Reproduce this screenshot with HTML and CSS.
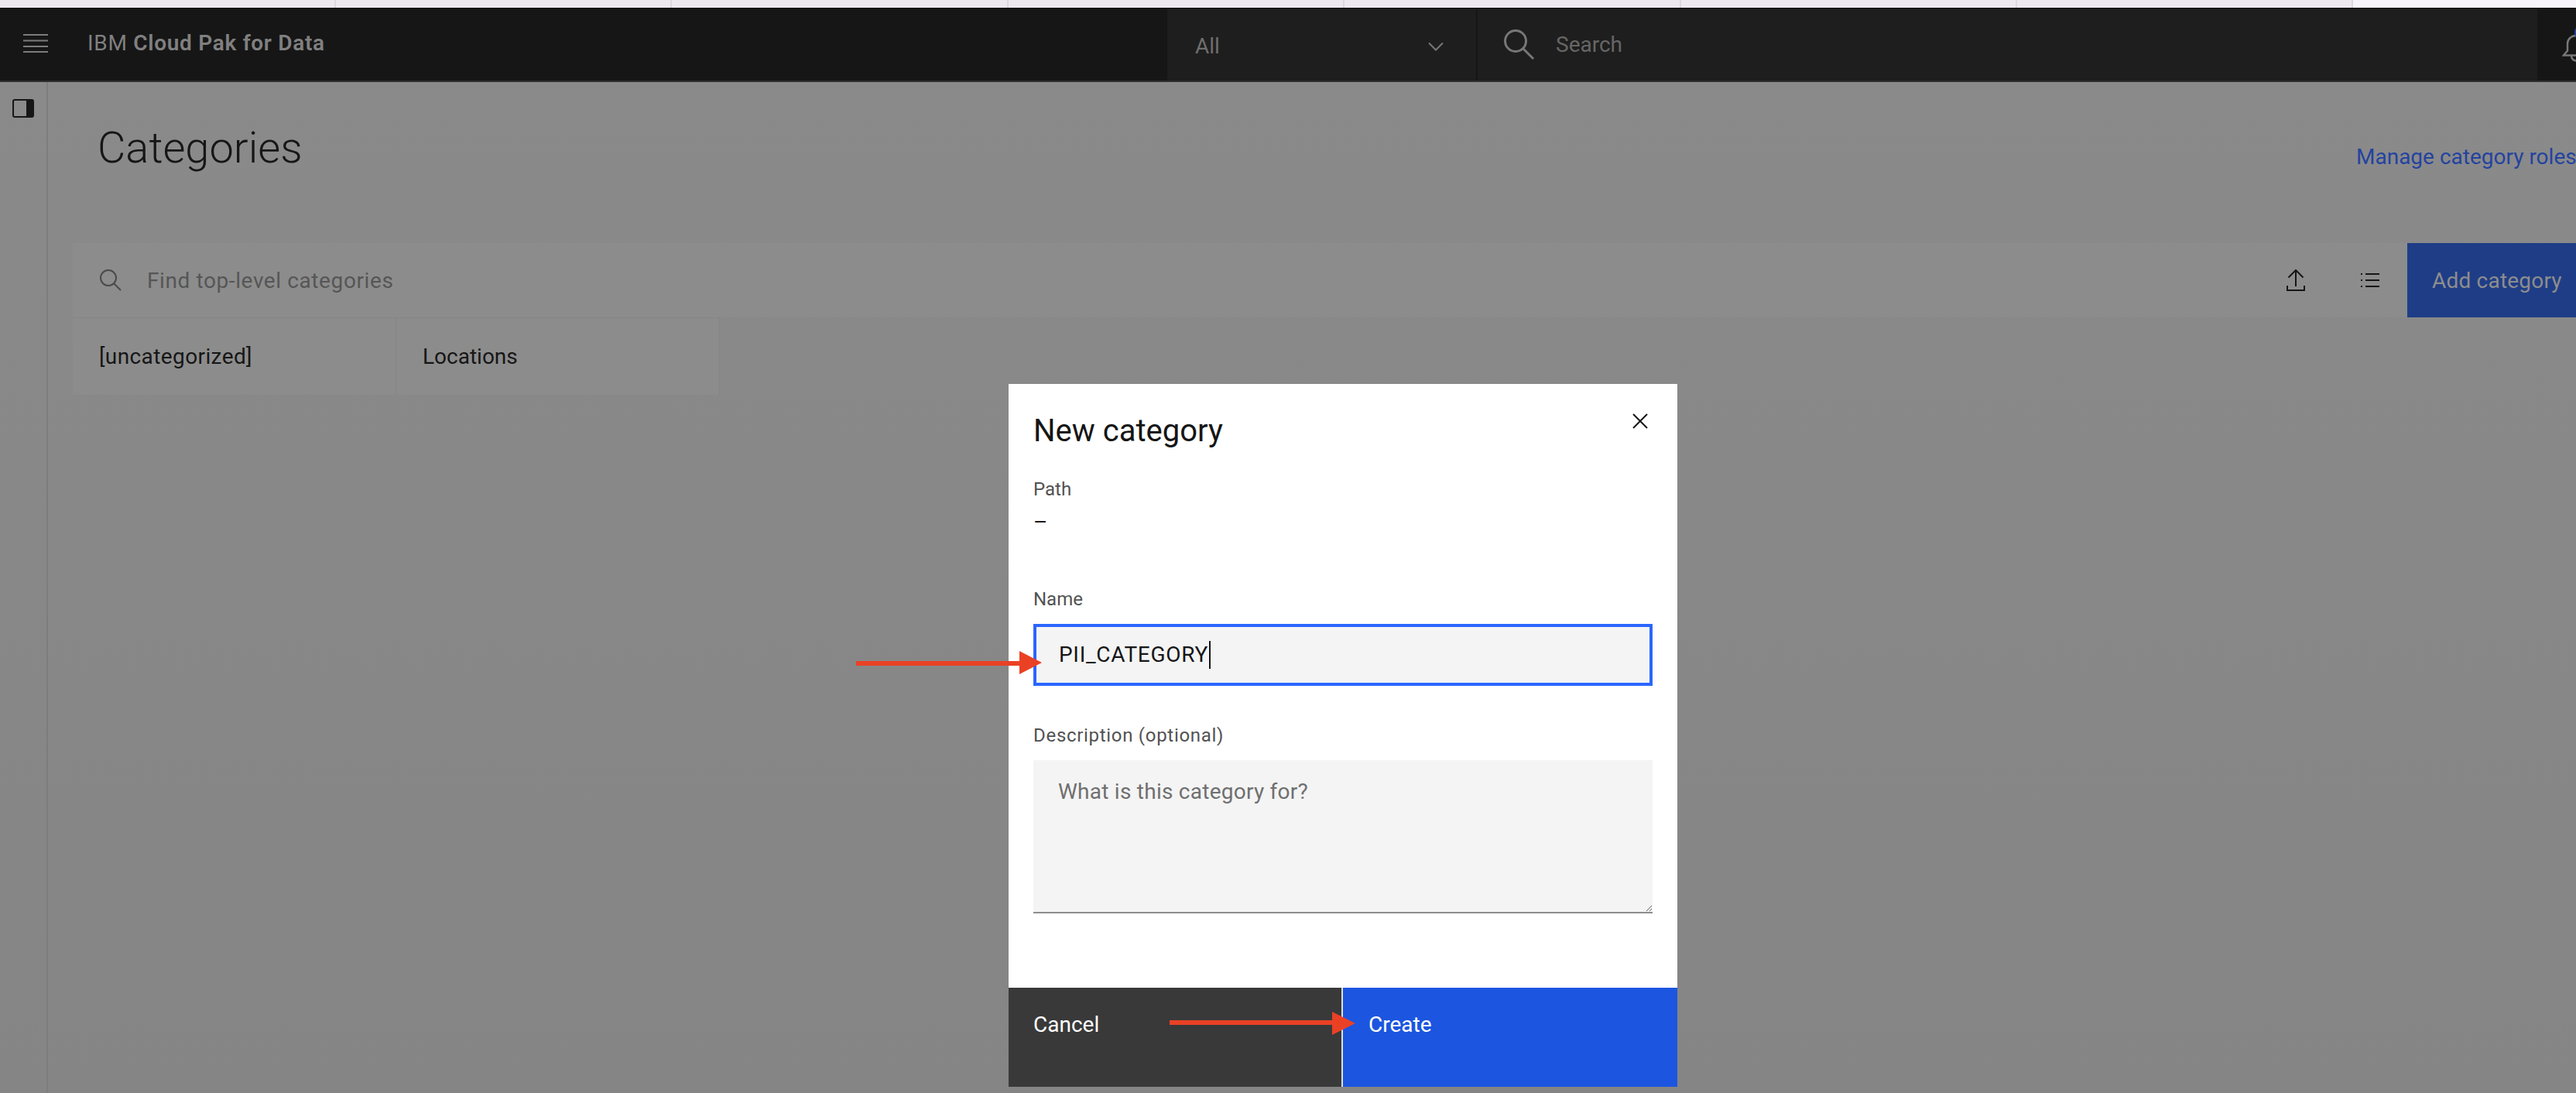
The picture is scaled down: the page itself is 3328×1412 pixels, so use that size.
FILE: index.html
```html
<!DOCTYPE html>
<html lang="en">
<head>
  <meta charset="UTF-8" />
  <title>Categories</title>
  <link rel="stylesheet" href="styles.css">
</head>
<body>
  <div class="tab-strip">
    <div class="tab"></div><div class="tab"></div><div class="tab"></div><div class="tab"></div>
    <div class="tab"></div><div class="tab"></div><div class="tab"></div>
    <div class="tab tab-active"></div>
  </div>

  <header class="topbar">
    <div class="brand-area">
      <svg class="menu-icon" width="32" height="24" viewBox="0 0 32 24">
        <path d="M0 1h32M0 8.500h32M0 16h32M0 23h32" stroke="#7c7c7c" stroke-width="2" fill="none"/>
      </svg>
      <div class="brand">IBM <b>Cloud Pak for Data</b></div>
    </div>
    <div class="search-area">
      <div class="scope">
        <span>All</span>
        <svg width="20" height="12" viewBox="0 0 20 12">
          <path d="M1 1.500l9 9 9-9" stroke="#777" stroke-width="2" fill="none"/>
        </svg>
      </div>
      <div class="global-search">
        <svg width="42" height="42" viewBox="0 0 42 42">
          <circle cx="16" cy="16" r="13.500" stroke="#777" stroke-width="3" fill="none"/>
          <path d="M26 26l13 13" stroke="#777" stroke-width="3" fill="none"/>
        </svg>
        <span>Search</span>
      </div>
    </div>
    <div class="notify">
      <svg width="40" height="40" viewBox="0 0 40 40">
        <path d="M2 30.500l5-6v-9c0-6 5-10.500 11-10.500s11 4.500 11 10.500v9l5 6zM12 31c0 4 3 6.500 6 6.500s6-2.500 6-6.500" stroke="#777" stroke-width="2.500" fill="none"/>
      </svg>
      <div class="notify-dot"></div>
    </div>
  </header>

  <div class="page">
    <aside class="sidebar">
      <svg width="28" height="24" viewBox="0 0 28 24">
        <rect x="1" y="1" width="26" height="22" rx="2" fill="#8a8a8a" stroke="#161616" stroke-width="2"/>
        <path d="M18 1h8a1 1 0 0 1 1 1v20a1 1 0 0 1-1 1h-8z" fill="#161616"/>
      </svg>
    </aside>
    <main class="content">
      <div class="title-row">
        <h1>Categories</h1>
        <a class="roles-link">Manage category roles</a>
      </div>
      <div class="toolbar">
        <div class="find">
          <svg width="30" height="28" viewBox="0 0 30 28">
            <ellipse cx="12" cy="11" rx="10" ry="10" stroke="#4a4a4a" stroke-width="2" fill="none"/>
            <path d="M19 18l9 9" stroke="#4a4a4a" stroke-width="2" fill="none"/>
          </svg>
          <span>Find top-level categories</span>
        </div>
        <div class="tool">
          <svg width="24" height="28" viewBox="0 0 24 28">
            <path d="M12 22V1M2.500 10.500L12 1l9.500 9.500M1 21v6h22v-6" stroke="#161616" stroke-width="2" fill="none"/>
          </svg>
        </div>
        <div class="tool">
          <svg width="24" height="20" viewBox="0 0 24 20">
            <path d="M6 2h18M6 10h18M6 18h18M0 2h2M0 10h2M0 18h2" stroke="#161616" stroke-width="2" fill="none"/>
          </svg>
        </div>
        <button class="add-btn">Add category</button>
      </div>
      <div class="tiles">
        <div class="tile tile-uncat">[uncategorized]</div>
        <div class="tile">Locations</div>
      </div>
    </main>
  </div>

  <section class="modal">
    <svg class="arrow arrow-name" width="240" height="30" viewBox="0 0 240 30">
      <path d="M0 13h211V0l29 15-29 15V19H0z" fill="#ea4125"/>
    </svg>
    <svg class="arrow arrow-create" width="240" height="30" viewBox="0 0 240 30">
      <path d="M0 11h210V0l30 15-30 15V17H0z" fill="#ea4125"/>
    </svg>
    <div class="modal-body">
      <div class="modal-head">
        <h2>New category</h2>
        <svg width="20" height="20" viewBox="0 0 20 20">
          <path d="M1 1l18 18M19 1L1 19" stroke="#161616" stroke-width="2" fill="none"/>
        </svg>
      </div>
      <div class="field-label path-label">Path</div>
      <div class="path-value">–</div>
      <div class="field-label name-label">Name</div>
      <div class="name-input"><span class="caret">PII_CATEGORY</span></div>
      <div class="field-label desc-label">Description (optional)</div>
      <textarea class="desc-input" placeholder="What is this category for?"></textarea>
    </div>
    <div class="modal-foot">
      <button class="foot-btn cancel-btn">Cancel</button>
      <button class="foot-btn create-btn">Create</button>
    </div>
  </section>
</body>
</html>
```

FILE: styles.css
```css
* {
  box-sizing: border-box;
}
html, body {
  margin: 0;
  padding: 0;
}
body {
  width: 3328px;
  height: 1412px;
  overflow: hidden;
  position: relative;
  display: flex;
  flex-direction: column;
  font-family: Roboto, "Noto Sans", sans-serif;
  font-size: 28px;
  color: #161616;
  background: #888888;
}

/* browser tabs cut off at the top of the shot */
.tab-strip {
  display: flex;
  height: 11px;
  flex: none;
  background: #ede8ef;
  border-bottom: 1px solid #000;
}
.tab {
  width: 434.400px;
  border-right: 2px solid #dcd8de;
}
.tab:first-child {
  width: 434px;
}
.tab-active {
  flex: 1;
  border-right: none;
  background: #f8f4fb;
}

.topbar {
  display: flex;
  height: 95px;
  flex: none;
  background: #161616;
  border-bottom: 2px solid #2f2f2f;
}
.brand-area {
  width: 1508px;
  flex: none;
  display: flex;
  align-items: center;
  padding: 0 0 4px 30px;
}
.brand {
  margin-left: 51px;
  color: #808080;
  font-size: 28px;
  letter-spacing: 0.700px;
}
.brand b {
  font-weight: 600;
}
.search-area {
  width: 1770px;
  flex: none;
  display: flex;
  background: #1e1e1e;
}
.scope {
  width: 401px;
  display: flex;
  align-items: center;
  justify-content: space-between;
  padding: 4px 42px 0 36px;
  border-right: 2px solid #161616;
  color: #6e6e6e;
}
.global-search {
  flex: 1;
  display: flex;
  align-items: center;
  gap: 26px;
  padding-left: 33px;
  color: #666;
}
.notify {
  flex: 1;
  min-width: 0;
  position: relative;
  padding: 30px 0 0 32px;
}
.notify-dot {
  position: absolute;
  left: 48px;
  top: 22px;
  width: 16px;
  height: 18px;
  border-radius: 50%;
  background: #2443a0;
}

.page {
  flex: 1;
  display: flex;
  background: linear-gradient(#8a8a8a, #858585);
}
.sidebar {
  width: 62px;
  flex: none;
  padding: 20px 0 0 16px;
  border-right: 2px solid #7d7d7d;
}
.content {
  flex: 1;
  min-width: 0;
  padding-left: 32px;
}
.title-row {
  height: 208px;
  display: flex;
  align-items: flex-start;
}
h1 {
  flex: 1;
  margin: 47px 0 0 32px;
  font-size: 56px;
  line-height: 76px;
  font-weight: 300;
  color: #161616;
}
.roles-link {
  width: 284px;
  margin-top: 80px;
  white-space: nowrap;
  overflow: hidden;
  color: #2443a0;
}

.toolbar {
  display: flex;
  height: 96px;
  align-items: center;
  background: #8c8c8c;
}
.find {
  flex: 1;
  display: flex;
  align-items: center;
  gap: 32px;
  padding-left: 34px;
  color: #565656;
  letter-spacing: 0.600px;
}
.tool {
  width: 96px;
  display: flex;
  justify-content: center;
}
.add-btn {
  width: 218px;
  height: 96px;
  padding: 0 0 0 32px;
  border: none;
  text-align: left;
  white-space: nowrap;
  font: inherit;
  letter-spacing: 0.200px;
  color: #8d8d8d;
  background: #1f3d87;
}

.tiles {
  display: flex;
}
.tile {
  width: 418px;
  height: 100px;
  display: flex;
  align-items: center;
  padding-left: 34px;
  background: #8c8c8c;
  border-top: 1px solid #858585;
  border-right: 1px solid #858585;
}
.tile-uncat {
  letter-spacing: 0.400px;
}

/* dialog sits on top of the dimmed page */
.modal {
  position: absolute;
  left: 1303px;
  top: 496px;
  width: 864px;
  height: 908px;
  display: flex;
  flex-direction: column;
  background: #fff;
}
.arrow {
  position: absolute;
  z-index: 2;
}
.arrow-name {
  left: -197px;
  top: 345px;
}
.arrow-create {
  left: 208px;
  top: 811px;
}
.modal-body {
  flex: 1;
  padding: 0 32px;
}
.modal-head {
  display: flex;
  justify-content: space-between;
  height: 110px;
  padding-top: 34px;
  padding-right: 6px;
}
.modal-head svg {
  margin-top: 4px;
}
h2 {
  margin: 0;
  font-size: 40px;
  line-height: 54px;
  font-weight: 400;
}
.field-label {
  font-size: 24px;
  line-height: 32px;
  color: #525252;
}
.path-label {
  margin-top: 10px;
}
.path-value {
  margin-top: 11px;
  line-height: 32px;
}
.name-label {
  margin-top: 67px;
}
.name-input {
  height: 80px;
  margin-top: 16px;
  padding-left: 29px;
  border: 4px solid #2a66ff;
  background: #f4f4f4;
  line-height: 72px;
  letter-spacing: 0.700px;
}
.caret {
  display: inline-block;
  line-height: 36px;
  padding-right: 1px;
  border-right: 2px solid #161616;
}
.desc-label {
  margin-top: 48px;
  letter-spacing: 0.700px;
}
.desc-input {
  display: block;
  width: 800px;
  height: 198px;
  margin-top: 16px;
  padding: 22px 32px;
  border: none;
  border-bottom: 2px solid #8d8d8d;
  border-radius: 0;
  outline: none;
  background: #f4f4f4;
  font: inherit;
  letter-spacing: 0.250px;
  line-height: 38px;
}
.desc-input::placeholder {
  color: #6f6f6f;
}
.modal-foot {
  display: flex;
  height: 128px;
  flex: none;
}
.foot-btn {
  height: 128px;
  border: none;
  padding: 0 0 34px 33px;
  text-align: left;
  font: inherit;
  color: #fff;
}
.cancel-btn {
  width: 432px;
  background: #393939;
  border-right: 2px solid #e0e0e0;
  padding-left: 32px;
}
.create-btn {
  flex: 1;
  background: #1c55e0;
}
```
